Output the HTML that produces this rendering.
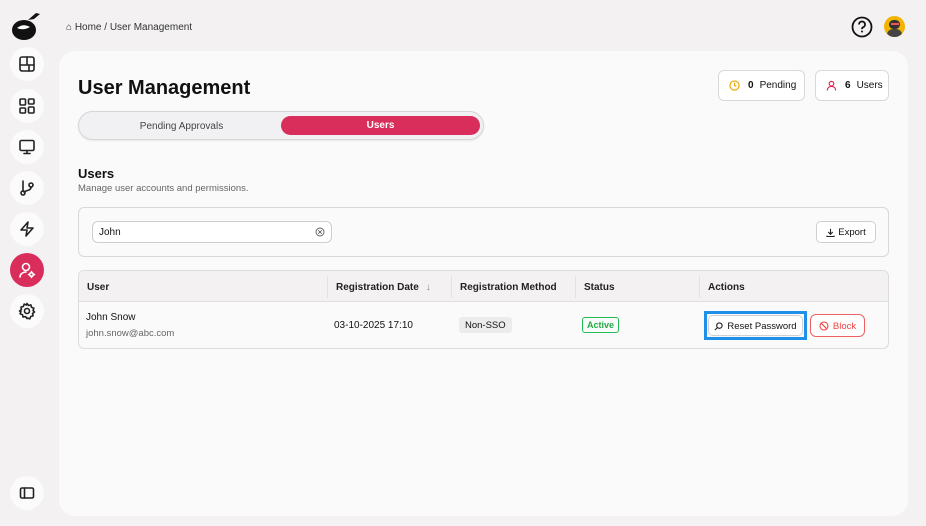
<!DOCTYPE html>
<html><head><meta charset="utf-8"><style>
*{box-sizing:border-box;margin:0;padding:0}
body{width:926px;height:526px;background:#f3f1f2;font-family:"Liberation Sans",sans-serif;color:#111;position:relative;overflow:hidden}
.a{position:absolute}
.nav{position:absolute;left:10px;width:34px;height:34px;border-radius:50%;background:#fbfbfb;display:flex;align-items:center;justify-content:center}
.nav svg{width:18px;height:18px;fill:none;stroke:#222;stroke-width:1.6;stroke-linecap:round;stroke-linejoin:round}
.panel{position:absolute;left:59px;top:51px;width:849px;height:465px;background:#fafafa;border-radius:16px}
.badge{position:absolute;top:70px;height:31px;border:1px solid #d9d9d9;border-radius:6px;background:#fff;font-size:10px;display:flex;align-items:center;padding-left:10px;gap:6px}
.th{position:absolute;top:282px;font-size:10px;font-weight:600;color:#222}
.div{position:absolute;top:276px;width:1px;height:22px;background:#e2e0e1}
</style></head><body>
<svg class="a" style="left:10px;top:8px" width="34" height="34" viewBox="0 0 34 34"><ellipse cx="14" cy="22" rx="12" ry="10" fill="#111"/><path d="M18 12 L26 5 L30 6 L24 11Z" fill="#111"/><path d="M7 20 Q13 15 20 19 Q13 23 7 20Z" fill="#fff"/></svg>
<div class="a" style="left:66px;top:22px;font-size:10px;color:#333">⌂ Home / User Management</div>
<svg class="a" style="left:851px;top:16px" width="22" height="22" viewBox="0 0 22 22"><circle cx="11" cy="11" r="9.5" fill="none" stroke="#111" stroke-width="1.8"/><path d="M8 8.5a3 3 0 1 1 4 2.8c-.8.4-1 1-1 1.8" fill="none" stroke="#111" stroke-width="1.8"/><circle cx="11" cy="15.5" r="1" fill="#111"/></svg>
<div class="a" style="left:884px;top:16px;width:21px;height:21px;border-radius:50%;background:#f2b400;overflow:hidden"><div class="a" style="left:5px;top:4px;width:11px;height:9px;border-radius:5px;background:#333"></div><div class="a" style="left:7px;top:7px;width:8px;height:2px;background:#e55"></div><div class="a" style="left:3px;top:13px;width:15px;height:10px;border-radius:6px 6px 0 0;background:#444"></div></div>

<div class="nav" style="top:47px"><svg viewBox="0 0 18 18"><rect x="2" y="2" width="14" height="14" rx="2"/><path d="M2 10h14M9 2v8M11 10v6"/></svg></div>
<div class="nav" style="top:89px"><svg viewBox="0 0 18 18"><rect x="2" y="2" width="5.5" height="6" rx="1"/><rect x="10.5" y="2" width="5.5" height="5" rx="1"/><rect x="2" y="11" width="5.5" height="5" rx="1"/><rect x="10.5" y="10" width="5.5" height="6" rx="1"/></svg></div>
<div class="nav" style="top:130px"><svg viewBox="0 0 18 18"><rect x="2" y="2.5" width="14" height="10" rx="1.5"/><path d="M9 12.5v3M6 15.5h6"/></svg></div>
<div class="nav" style="top:171px"><svg viewBox="0 0 18 18"><circle cx="5" cy="14" r="2"/><circle cx="13" cy="6" r="2"/><path d="M5 2v10M13 8c0 4-5 3-7 5"/></svg></div>
<div class="nav" style="top:212px"><svg viewBox="0 0 18 18"><path d="M10 2L3 10h6l-1 6 7-8H9z"/></svg></div>
<div class="nav" style="top:253px;background:#d92d5b"><svg viewBox="0 0 18 18" style="stroke:#fff"><circle cx="8" cy="6" r="3.5"/><path d="M2 16c0-3 3-5 6-5"/><circle cx="13.5" cy="13.5" r="1.8"/><path d="M13.5 10.5v1M13.5 15.5v1M10.5 13.5h1M15.5 13.5h1"/></svg></div>
<div class="nav" style="top:294px"><svg viewBox="0 0 18 18"><circle cx="9" cy="9" r="2.5"/><path d="M9 1.5l1.5 2 2.4-.6.6 2.4 2.4.9-.9 2.3 1.5 1.5-2 1.5.6 2.4-2.4.6-.9 2.4-2.3-.9L9 16.5l-1.5-2-2.4.6-.6-2.4-2.4-.9.9-2.3L1.5 9l2-1.5-.6-2.4 2.4-.6.9-2.4 2.3.9z"/></svg></div>
<div class="nav" style="top:476px"><svg viewBox="0 0 18 18"><rect x="2.5" y="4" width="13" height="10" rx="1.5"/><path d="M6.5 4v10"/></svg></div>

<div class="panel"></div>
<div class="a" style="left:78px;top:77px;font-size:20px;font-weight:600;color:#111">User Management</div>
<div class="badge" style="left:718px;width:87px"><svg width="11" height="11" viewBox="0 0 12 12"><circle cx="6" cy="6" r="5" fill="none" stroke="#f0a500" stroke-width="1.3"/><path d="M6 3v3l2 1" fill="none" stroke="#f0a500" stroke-width="1.3"/></svg><b style="margin-left:2px;font-weight:600">0</b><span>Pending</span></div>
<div class="badge" style="left:815px;width:74px"><svg width="11" height="11" viewBox="0 0 12 12"><circle cx="6" cy="4" r="2.5" fill="none" stroke="#d92d5b" stroke-width="1.3"/><path d="M1.5 11.5c0-3 2-4.5 4.5-4.5s4.5 1.5 4.5 4.5" fill="none" stroke="#d92d5b" stroke-width="1.3"/></svg><b style="margin-left:2px;font-weight:600">6</b><span>Users</span></div>

<div class="a" style="left:78px;top:111px;width:406px;height:29px;border:1px solid #d6d6d6;border-radius:15px;background:#f1f1f3;box-shadow:0 1px 2px rgba(0,0,0,.08)"></div>
<div class="a" style="left:83px;top:121px;width:197px;text-align:center;font-size:10px;color:#444">Pending Approvals</div>
<div class="a" style="left:281px;top:116px;width:199px;height:19px;border-radius:10px;background:#d92d5b;color:#fff;font-size:10px;font-weight:600;text-align:center;line-height:20px">Users</div>

<div class="a" style="left:78px;top:166px;font-size:13px;font-weight:600">Users</div>
<div class="a" style="left:78px;top:183px;font-size:9.5px;color:#666">Manage user accounts and permissions.</div>

<div class="a" style="left:78px;top:207px;width:811px;height:50px;border:1px solid #d8d8d8;border-radius:6px;background:#fafafa"></div>
<div class="a" style="left:92px;top:221px;width:240px;height:22px;border:1px solid #cfcfcf;border-radius:6px;background:#fff;font-size:10px;padding:5px 0 0 6px">John</div>
<svg class="a" style="left:315px;top:227px" width="10" height="10" viewBox="0 0 10 10"><circle cx="5" cy="5" r="4" fill="none" stroke="#666"/><path d="M3.3 3.3l3.4 3.4M6.7 3.3L3.3 6.7" stroke="#666"/></svg>
<div class="a" style="left:816px;top:221px;width:60px;height:22px;border:1px solid #cfcfcf;border-radius:5px;background:#fff;font-size:9.5px;display:flex;align-items:center;justify-content:center;gap:3px"><svg width="9" height="9" viewBox="0 0 10 10"><path d="M5 1v6M2.5 4.5L5 7l2.5-2.5M1 8.5v1h8v-1" fill="none" stroke="#222" stroke-width="1.2"/></svg>Export</div>

<div class="a" style="left:78px;top:270px;width:811px;height:79px;border:1px solid #dcdcdc;border-radius:6px;background:#fafafa;overflow:hidden"><div style="height:31px;background:#f3f1f2;border-bottom:1px solid #dedede"></div></div>
<div class="th" style="left:87px">User</div>
<div class="div" style="left:327px"></div>
<div class="th" style="left:336px">Registration Date <span style="font-weight:normal;color:#888;margin-left:4px">↓</span></div>
<div class="div" style="left:451px"></div>
<div class="th" style="left:460px">Registration Method</div>
<div class="div" style="left:575px"></div>
<div class="th" style="left:584px">Status</div>
<div class="div" style="left:699px"></div>
<div class="th" style="left:708px">Actions</div>

<div class="a" style="left:86px;top:312px;font-size:10px">John Snow</div>
<div class="a" style="left:86px;top:328px;font-size:9.5px;color:#666">john.snow@abc.com</div>
<div class="a" style="left:334px;top:320px;font-size:10px">03-10-2025 17:10</div>
<div class="a" style="left:459px;top:317px;padding:0 6px;height:16px;line-height:17px;background:#ececec;border-radius:3px;font-size:9.5px">Non-SSO</div>
<div class="a" style="left:582px;top:317px;width:37px;height:16px;border:1px solid #22bb55;border-radius:3px;color:#22aa44;font-size:9px;font-weight:600;text-align:center;line-height:15px">Active</div>
<div class="a" style="left:704px;top:311px;width:103px;height:29px;border:3px solid #1e90e8"></div>
<div class="a" style="left:708px;top:315px;width:95px;height:21px;border:1px solid #d0d0d0;border-radius:5px;background:#fff;font-size:9.5px;display:flex;align-items:center;justify-content:center;gap:4px;padding-top:1px"><svg width="9" height="9" viewBox="0 0 10 10"><circle cx="6" cy="4" r="3" fill="none" stroke="#222" stroke-width="1.2"/><path d="M4 6L1 9" stroke="#222" stroke-width="1.2"/></svg>Reset Password</div>
<div class="a" style="left:810px;top:314px;width:55px;height:23px;border:1px solid #f06060;border-radius:6px;background:#fff;color:#f04545;font-size:9.5px;display:flex;align-items:center;justify-content:center;gap:4px;padding-top:1px"><svg width="10" height="10" viewBox="0 0 10 10"><circle cx="5" cy="5" r="4" fill="none" stroke="#f04545" stroke-width="1.1"/><path d="M2.2 2.2l5.6 5.6" stroke="#f04545" stroke-width="1.1"/></svg>Block</div>
</body></html>
